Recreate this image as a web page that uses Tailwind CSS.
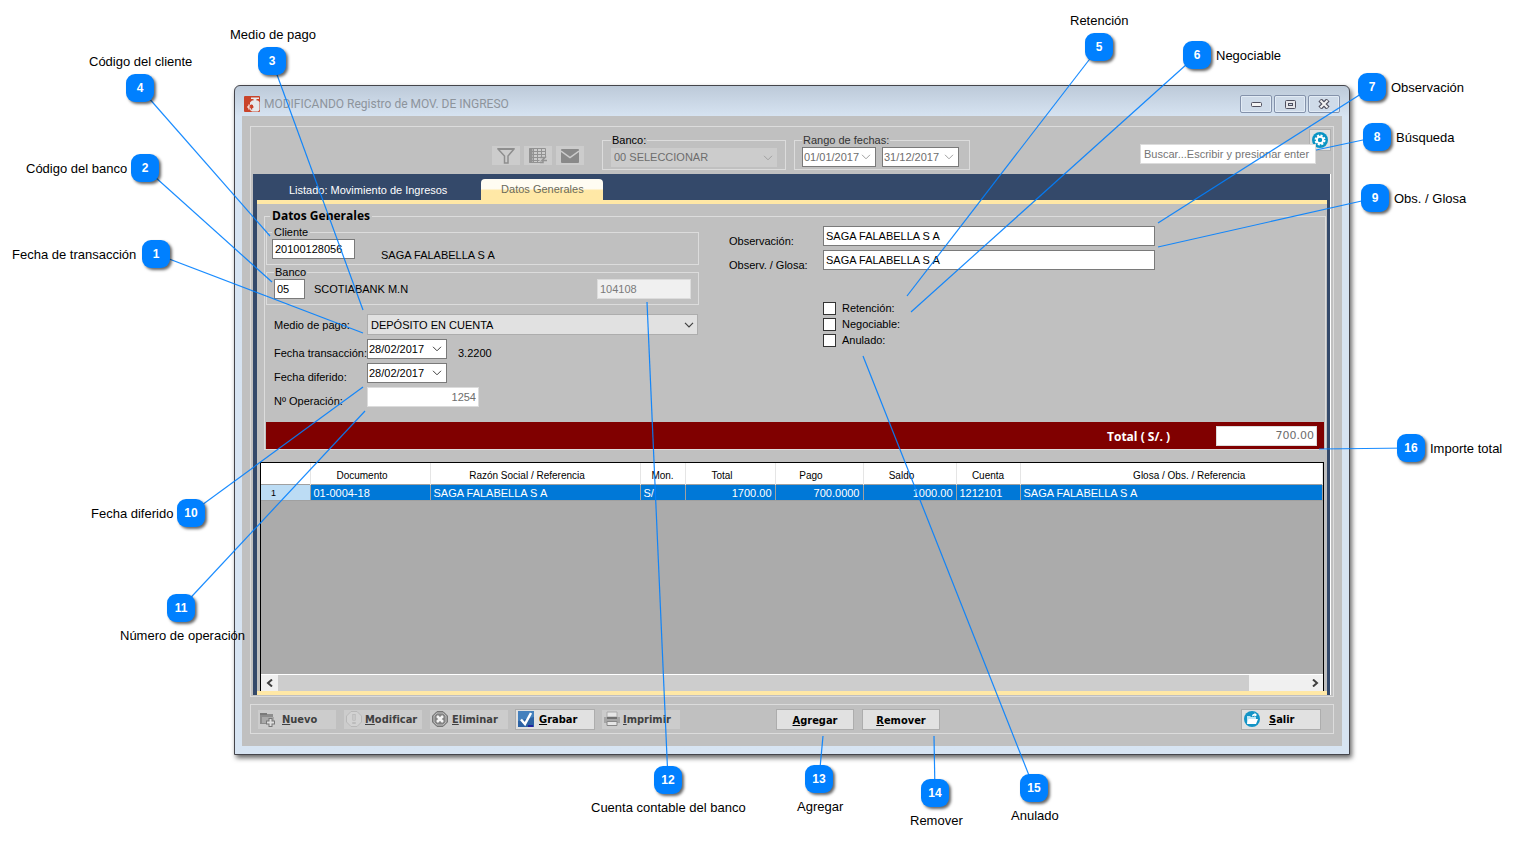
<!DOCTYPE html>
<html lang="es">
<head>
  <meta charset="UTF-8" />
  <meta name="viewport" content="width=device-width, initial-scale=1.0" />
  <title>Registro de MOV. DE INGRESO</title>
  <script src="https://cdn.jsdelivr.net/npm/@tailwindcss/browser@4"></script>
</head>
<body class="bg-white font-['Liberation_Sans',sans-serif] text-[11px] text-black">

  <div class="relative pt-[85px] pr-[168px] pb-[88px] pl-[234px]">

    <!-- Window -->
    <main class="rounded-t-md border border-[#45454b] bg-[#d7e4f2] px-[7px] pb-[8px] shadow-[2px_3px_5px_rgba(0,0,0,0.6)] bg-linear-to-b from-[#bdcad9] via-[#d7e4f2] via-[31px] to-[#d7e4f2]">

      <!-- Title bar -->
      <header class="flex h-[30px] items-center pt-[6px] pr-[2px] pl-[2px]">
        <svg class="size-4" viewBox="0 0 16 16">
          <rect width="16" height="16" rx="1" fill="#c9432a" />
          <path d="M8 4.500h1.500V3H7V1.500h8V3h-2.500v1.500H14l1.500 1.500v8L14 15.500H8L6 14v-2h3V9H6V6.500z" fill="#e6e9eb" />
          <path d="M5 8.500v5M3 11h4.500" stroke="#fff" stroke-width="1.200" />
          <path d="M7.500 8.500v5M5.500 11h4" stroke="#c9432a" stroke-width="1.500" />
        </svg>
        <h1 class="ml-1 font-[Roboto,sans-serif] text-[12px] text-[#8d949c]">MODIFICANDO Registro de MOV. DE INGRESO</h1>
        <div class="ml-auto flex gap-[2px]">
          <button aria-label="Minimizar" class="flex h-[18px] w-8 items-center justify-center rounded-xs border border-[#8492ab] bg-[#cfdbe9] shadow-[inset_0_0_0_1px_#e2ebf5]">
            <svg class="h-[5px] w-[11px]" viewBox="0 0 11 5"><rect x=".5" y=".5" width="10" height="4" rx="1" fill="#f4f4f4" stroke="#50505f" /></svg>
          </button>
          <button aria-label="Maximizar" class="flex h-[18px] w-8 items-center justify-center rounded-xs border border-[#8492ab] bg-[#cfdbe9] shadow-[inset_0_0_0_1px_#e2ebf5]">
            <svg class="h-[9px] w-[11px]" viewBox="0 0 11 9"><rect x=".5" y=".5" width="10" height="8" rx="1" fill="#e6e6ea" stroke="#50505f" /><rect x="3.500" y="3.500" width="4" height="2" fill="#cfdbe9" stroke="#50505f" /></svg>
          </button>
          <button aria-label="Cerrar" class="flex h-[18px] w-8 items-center justify-center rounded-xs border border-[#8492ab] bg-[#cfdbe9] shadow-[inset_0_0_0_1px_#e2ebf5]">
            <svg class="h-[10px] w-3" viewBox="0 0 12 10"><path d="M2 1l8 8M10 1L2 9" stroke="#50505f" stroke-width="4.500" /><path d="M2.500 1.500l7 7M9.500 1.500l-7 7" stroke="#f4f4f4" stroke-width="2" /></svg>
          </button>
        </div>
      </header>

      <div class="bg-[#c0c0c0] px-[8px] pt-[10px] pb-[12px]">

        <section class="border border-[#dcdcdc] px-[2px] pb-[1px]">

          <!-- Toolbar -->
          <div class="flex h-[47px] items-start pl-[239px]">
            <div class="mt-[19px] flex gap-1">
              <button disabled aria-label="Filtrar" class="flex h-[19px] w-7 items-center justify-center bg-[#cccccc]">
                <svg class="size-[18px]" viewBox="0 0 18 18" fill="none" stroke="#8e8e8e" stroke-width="1.500"><path d="M1 2h16l-6 7v7H7.500V9z" /><path d="M1 2h16" stroke-width="2" /></svg>
              </button>
              <button disabled aria-label="Exportar" class="flex h-[19px] w-7 items-center justify-center bg-[#cccccc]">
                <svg class="size-[18px]" viewBox="0 0 18 18" fill="none" stroke="#929292"><path d="M.5 1.500h16v9M.5 1.500v14h11M.5 4.500h16M.5 7.500h16M.5 10.500h12M.5 13.500h10M4.500 1.500v14M8.500 1.500v14M12.500 1.500v9" /><path d="M2 1v15" stroke-width="3" /><path d="M11 10.500h5l-3 3h5M14 12.500v3h-3" stroke-width="1.500" /></svg>
              </button>
              <button disabled aria-label="Enviar correo" class="flex h-[19px] w-7 items-center justify-center bg-[#cccccc]">
                <svg class="h-[14px] w-[18px]" viewBox="0 0 18 14"><rect width="18" height="14" rx="1" fill="#898989" /><path d="M0 2l9 6.500L18 2" fill="none" stroke="#cccccc" stroke-width="1.500" /></svg>
              </button>
            </div>

            <fieldset class="mt-[6px] ml-[18px] h-[37px] w-[184px] shrink-0 border border-[#dcdcdc] px-2">
              <legend class="px-[1px] leading-[14px]">Banco:</legend>
              <div class="relative mt-[1px]">
                <select disabled aria-label="Banco" class="h-[19px] w-full appearance-none bg-[#cccccc] px-[3px] text-[#6d6d6d] opacity-100">
                  <option>00 SELECCIONAR</option>
                </select>
                <svg class="pointer-events-none absolute top-[7px] right-1 h-[6px] w-[10px]" viewBox="0 0 10 6" fill="none" stroke="#a0a0a0"><path d="M1 .8l4 4 4-4" /></svg>
              </div>
            </fieldset>

            <fieldset class="mt-[6px] ml-2 h-[37px] w-[176px] shrink-0 border border-[#dcdcdc] px-[7px]">
              <legend class="px-[1px] leading-[14px] text-[#333]">Rango de fechas:</legend>
              <div class="flex gap-[6px]">
                <div class="flex h-5 w-[74px] items-center border border-[#7a7a7a] bg-white pr-1">
                  <input disabled aria-label="Fecha desde" value="01/01/2017" class="w-0 flex-1 pl-[1px] text-[#6d6d6d]" />
                  <svg class="h-[6px] w-[10px]" viewBox="0 0 10 6" fill="none" stroke="#a0a0a0"><path d="M1 .8l4 4 4-4" /></svg>
                </div>
                <div class="flex h-5 w-[77px] items-center border border-[#7a7a7a] bg-white pr-1">
                  <input disabled aria-label="Fecha hasta" value="31/12/2017" class="w-0 flex-1 pl-[1px] text-[#6d6d6d]" />
                  <svg class="h-[6px] w-[10px]" viewBox="0 0 10 6" fill="none" stroke="#a0a0a0"><path d="M1 .8l4 4 4-4" /></svg>
                </div>
              </div>
            </fieldset>

            <div class="relative ml-auto pt-[17px] pr-[15px]">
              <button aria-label="Configuración" class="absolute top-[2px] right-0 flex size-[22px] items-center justify-center border border-[#b0b0b0] bg-[#e1e1e1]">
                <svg class="size-4" viewBox="0 0 16 16"><circle cx="8" cy="8" r="8" fill="#0a94c4" /><circle cx="8" cy="8" r="4" fill="none" stroke="#fff" stroke-width="3" stroke-dasharray="1.800 1.340" /><circle cx="8" cy="8" r="3.200" fill="none" stroke="#fff" stroke-width="2" /></svg>
              </button>
              <input type="text" aria-label="Búsqueda" placeholder="Buscar...Escribir y presionar enter" class="relative h-5 w-[176px] border border-[#dcdcdc] bg-white pl-[3px] placeholder:text-[#757575]" />
            </div>
          </div>

          <!-- Tabs -->
          <div class="border-r border-white bg-[#34496a] pr-[3px] pl-1">
            <nav class="flex h-[26px] items-end">
              <a href="#listado" class="ml-8 leading-5 text-white">Listado: Movimiento de Ingresos</a>
              <button class="ml-[34px] h-[21px] w-[122px] rounded-t-sm bg-linear-to-b from-[#fffcf2] from-45% to-[#ffe8a6] to-55% text-[#6a6a5a]">Datos Generales</button>
            </nav>

            <div class="border-y-4 border-[#ffe8a6] bg-[#c0c0c0] pt-1">

              <!-- Form -->
              <fieldset class="mr-[1px] ml-[7px] border border-[#dcdcdc] px-[1px]">
                <legend class="ml-1 px-[2px] font-['Open_Sans',sans-serif] text-[12px] leading-4 font-bold">Datos Generales</legend>

                <div class="flex items-start">
                  <div class="w-[433px] shrink-0 pt-[1px]">
                    <fieldset class="flex h-10 border border-[#dcdcdc] px-[5px]">
                      <legend class="px-[2px] leading-[14px]">Cliente</legend>
                      <div class="flex items-end">
                        <input type="text" aria-label="Código del cliente" value="20100128056" class="h-5 w-[83px] self-start border border-[#7a7a7a] bg-white pl-[2px]" />
                        <span class="ml-[26px] leading-[18px]">SAGA FALABELLA S A</span>
                      </div>
                    </fieldset>
                    <fieldset class="h-10 border border-[#dcdcdc] px-[7px]">
                      <legend class="px-[1px] leading-[14px]">Banco</legend>
                      <div class="flex items-center">
                        <input type="text" aria-label="Código del banco" value="05" class="h-5 w-[31px] border border-[#7a7a7a] bg-white pl-[2px]" />
                        <span class="ml-[9px]">SCOTIABANK M.N</span>
                        <input type="text" readonly aria-label="Cuenta contable del banco" value="104108" class="ml-auto h-5 w-[94px] border border-[#dcdcdc] bg-[#f0f0f0] pl-[2px] text-[#7a7a7a]" />
                      </div>
                    </fieldset>

                    <div class="mt-[9px] grid grid-cols-[93px_331px] items-end gap-y-1 pl-2 leading-[12px]">
                      <label for="medio" class="self-center">Medio de pago:</label>
                      <div class="relative">
                        <select id="medio" class="block h-[21px] w-full appearance-none border border-[#adadad] bg-[#e1e1e1] px-[3px]">
                          <option>DEPÓSITO EN CUENTA</option>
                        </select>
                        <svg class="pointer-events-none absolute top-2 right-1 h-[6px] w-[10px]" viewBox="0 0 10 6" fill="none" stroke="#404040" stroke-width="1.200"><path d="M1 .8l4 4 4-4" /></svg>
                      </div>
                      <label for="ftrans" class="whitespace-nowrap">Fecha transacción:</label>
                      <div class="flex items-end">
                        <div class="flex h-5 w-20 items-center border border-[#7a7a7a] bg-white pr-1">
                          <input id="ftrans" type="text" value="28/02/2017" class="w-0 flex-1 pl-[1px]" />
                          <svg class="h-[6px] w-[10px]" viewBox="0 0 10 6" fill="none" stroke="#404040"><path d="M1 .8l4 4 4-4" /></svg>
                        </div>
                        <span class="ml-[11px]">3.2200</span>
                      </div>
                      <label for="fdif">Fecha diferido:</label>
                      <div class="flex h-5 w-20 items-center border border-[#7a7a7a] bg-white pr-1">
                        <input id="fdif" type="text" value="28/02/2017" class="w-0 flex-1 pl-[1px]" />
                        <svg class="h-[6px] w-[10px]" viewBox="0 0 10 6" fill="none" stroke="#404040"><path d="M1 .8l4 4 4-4" /></svg>
                      </div>
                      <label for="nop">Nº Operación:</label>
                      <input id="nop" type="text" readonly value="1254" class="h-5 w-28 border border-[#dcdcdc] bg-white pr-[2px] text-right text-[#6d6d6d]" />
                    </div>
                  </div>

                  <div class="ml-[30px] pt-[2px]">
                    <div class="grid grid-cols-[94px_332px] items-end gap-y-1 leading-[10px]">
                      <label for="obs">Observación:</label>
                      <input id="obs" type="text" value="SAGA FALABELLA S A" class="h-5 border border-[#7a7a7a] bg-white pl-[2px]" />
                      <label for="glosa">Observ. / Glosa:</label>
                      <input id="glosa" type="text" value="SAGA FALABELLA S A" class="h-5 border border-[#7a7a7a] bg-white pl-[2px]" />
                    </div>
                    <div class="mt-[30px] ml-[94px] flex flex-col leading-4">
                      <label class="flex items-center gap-[6px]"><input type="checkbox" class="size-[13px] appearance-none border border-[#333] bg-white" />Retención:</label>
                      <label class="flex items-center gap-[6px]"><input type="checkbox" class="size-[13px] appearance-none border border-[#333] bg-white" />Negociable:</label>
                      <label class="flex items-center gap-[6px]"><input type="checkbox" class="size-[13px] appearance-none border border-[#333] bg-white" />Anulado:</label>
                    </div>
                  </div>
                </div>

                <div class="mt-[15px] flex h-[27px] items-center justify-end bg-[#800000] pr-[7px]">
                  <label for="total" class="mr-[46px] pt-[2px] font-['Open_Sans',sans-serif] text-[12px] font-bold text-white">Total ( S/. )</label>
                  <input id="total" type="text" readonly value="700.00" class="h-5 w-[101px] border border-[#dcdcdc] bg-white pr-[2px] text-right font-['DejaVu_Sans',sans-serif] text-[#6d6d6d]" />
                </div>
              </fieldset>

              <!-- Grid -->
              <div class="mt-[12px] mr-[3px] ml-[3px] flex h-[229px] flex-col border-x border-t border-black bg-[#ababab]">
                <table class="w-full table-fixed border-collapse whitespace-nowrap">
                  <colgroup>
                    <col class="w-[49px]" /><col class="w-[120px]" /><col class="w-[210px]" /><col class="w-[45px]" /><col class="w-[90px]" />
                    <col class="w-[88px]" /><col class="w-[93px]" /><col class="w-[64px]" /><col />
                  </colgroup>
                  <thead>
                    <tr class="h-[21px] border-b border-[#a0a0a0] bg-white text-[10px] *:border-r *:border-[#e5e5e5] *:p-0 *:pt-[4px] *:font-normal">
                      <th></th>
                      <th><span class="mr-4">Documento</span></th>
                      <th><span class="mr-4">Razón Social / Referencia</span></th>
                      <th>Mon.</th>
                      <th><span class="mr-4">Total</span></th>
                      <th><span class="mr-4">Pago</span></th>
                      <th><span class="mr-4">Saldo</span></th>
                      <th>Cuenta</th>
                      <th><span class="ml-9">Glosa / Obs. / Referencia</span></th>
                    </tr>
                  </thead>
                  <tbody>
                    <tr class="h-4 border-b border-[#a0a0a0] bg-[#0078d7] leading-[14px] text-white *:border-r *:border-[#a0a0a0] *:px-[3px] *:pt-[1px] *:pb-0">
                      <td class="bg-[#bcdcf4] text-[9px] text-black"><span class="ml-[7px]">1</span></td>
                      <td>01-0004-18</td>
                      <td>SAGA FALABELLA S A</td>
                      <td>S/</td>
                      <td class="text-right">1700.00</td>
                      <td class="text-right">700.0000</td>
                      <td class="text-right">1000.00</td>
                      <td>1212101</td>
                      <td>SAGA FALABELLA S A</td>
                    </tr>
                  </tbody>
                </table>
                <div class="mt-auto flex h-[17px] items-center justify-between border-t border-white bg-[#f0f0f0]">
                  <button aria-label="Desplazar a la izquierda" class="flex w-[17px] justify-center"><svg class="size-2" viewBox="0 0 8 8" fill="none" stroke="#404040" stroke-width="2"><path d="M6 .5L2 4l4 3.500" /></svg></button>
                  <div class="mr-[57px] h-full flex-1 bg-[#cdcdcd]"></div>
                  <button aria-label="Desplazar a la derecha" class="flex w-[17px] justify-center"><svg class="size-2" viewBox="0 0 8 8" fill="none" stroke="#404040" stroke-width="2"><path d="M2 .5L6 4 2 7.500" /></svg></button>
                </div>
              </div>
            </div>
          </div>
        </section>

        <!-- Actions -->
        <footer class="mt-[7px] flex h-[30px] items-center border border-[#dcdcdc] pr-[12px] pl-[7px] font-['DejaVu_Sans_Condensed','DejaVu_Sans',sans-serif] text-[11px] font-bold">
          <button disabled class="flex h-[19px] w-[78px] items-center gap-[6px] bg-[#cccccc] pl-[2px] text-[#404040]">
            <svg class="size-4" viewBox="0 0 16 16"><path d="M0 3h13v10H0z" fill="#8d8d8d" /><path d="M2 6h12v6H2z" fill="#aaa" /><path d="M0 2h7v2H0z" fill="#7a7a7a" /><path d="M10.500 7v9M6 11.500h9" stroke="#777" stroke-width="4" /><path d="M10.500 8v7M7 11.500h7" stroke="#ddd" stroke-width="2" /></svg>
            <span class="pt-[2px]"><u>N</u>uevo</span>
          </button>
          <button disabled class="ml-2 flex h-[19px] w-[78px] items-center gap-[3px] bg-[#cccccc] pl-[2px] text-[#404040]">
            <svg class="size-4 shrink-0" viewBox="0 0 16 16"><path d="M5 .5h6L15.500 5v6L11 15.500H5L.5 11V5z" fill="#d2d2d2" stroke="#b8b8b8" /><path d="M8 3v6.500M8 11v2" stroke="#b0b0b0" stroke-width="3" /><path d="M8 3.500v5.500M8 11.500v1" stroke="#e0e0e0" /></svg>
            <span class="pt-[2px]"><u>M</u>odificar</span>
          </button>
          <button disabled class="ml-2 flex h-[19px] w-[78px] items-center gap-[4px] bg-[#cccccc] pl-[2px] text-[#404040]">
            <svg class="size-4 shrink-0" viewBox="0 0 16 16"><path d="M5 .5h6L15.500 5v6L11 15.500H5L.5 11V5z" fill="#858585" stroke="#777" /><path d="M5 2h6l3 3v6l-3 3H5l-3-3V5z" fill="none" stroke="#bbb" /><path d="M5 5l6 6M11 5l-6 6" stroke="#f4f4f4" stroke-width="2.500" /></svg>
            <span class="pt-[2px]"><u>E</u>liminar</span>
          </button>
          <button class="ml-[7px] flex h-[21px] w-20 items-center gap-[5px] border border-[#adadad] bg-[#e1e1e1] pl-[2px]">
            <svg class="size-4 shrink-0" viewBox="0 0 16 16"><rect width="16" height="16" fill="#2c62a4" /><path d="M0 0h16v6L0 10z" fill="#4480bd" /><path d="M10 14h5v2h-5z" fill="#2222a0" /><path d="M3 8.500l4 4.500 6-11" fill="none" stroke="#fff" stroke-width="2.500" /></svg>
            <span class="pt-[2px]"><u>G</u>rabar</span>
          </button>
          <button disabled class="ml-[7px] flex h-[19px] w-[78px] items-center gap-[3px] bg-[#cccccc] pl-[2px] text-[#404040]">
            <svg class="size-4 shrink-0" viewBox="0 0 16 16"><path d="M3 1h10v5H3z" fill="#e6e6e6" stroke="#aaa" /><path d="M0 6h16v6H0z" fill="#a6a6a6" /><path d="M3 6h10v2H3z" fill="#707070" /><path d="M3 10.500h10v4H3z" fill="#e6e6e6" stroke="#888" /></svg>
            <span class="pt-[2px]"><u>I</u>mprimir</span>
          </button>
          <button class="ml-24 h-[21px] w-[78px] border border-[#adadad] bg-[#e1e1e1] pt-[3px]"><u>A</u>gregar</button>
          <button class="ml-2 h-[21px] w-[78px] border border-[#adadad] bg-[#e1e1e1] pt-[3px]"><u>R</u>emover</button>
          <button class="ml-auto flex h-[21px] w-20 items-center gap-[9px] border border-[#adadad] bg-[#e1e1e1] pl-[2px]">
            <svg class="size-4 shrink-0" viewBox="0 0 16 16"><circle cx="8" cy="8" r="8" fill="#1494c6" /><path d="M3 5h3l1 1h5v7H3z" fill="#bfe6f5" /><path d="M4.500 8H14l-2 5H3z" fill="#fff" /><path d="M8 5.500c0-2 1-2.500 2.500-2.500V1.500L13 4l-2.500 2V4.500" fill="#fff" /></svg>
            <span class="pt-[2px]"><u>S</u>alir</span>
          </button>
        </footer>
      </div>
    </main>

    <!-- Callouts -->
    <svg id="lines" class="pointer-events-none absolute inset-0 h-full w-full" fill="none" stroke="#0080ff" stroke-width="1.200" stroke-opacity=".9"></svg>
    <div id="callouts"></div>
  </div>

  <script>
    // x, y: badge centre; tx, ty: line end; lx, ly: label left edge and middle
    const callouts = [
      { n: 1, x: 156, y: 254, tx: 363, ty: 333, lx: 12, ly: 254, text: "Fecha de transacción" },
      { n: 2, x: 145, y: 168, tx: 272, ty: 282, lx: 26, ly: 168, text: "Código del banco" },
      { n: 3, x: 272, y: 61, tx: 363, ty: 310, lx: 230, ly: 34, text: "Medio de pago" },
      { n: 4, x: 140, y: 88, tx: 270, ty: 236, lx: 89, ly: 61, text: "Código del cliente" },
      { n: 5, x: 1099, y: 47, tx: 907, ty: 296, lx: 1070, ly: 20, text: "Retención" },
      { n: 6, x: 1197, y: 55, tx: 911, ty: 312, lx: 1216, ly: 55, text: "Negociable" },
      { n: 7, x: 1372, y: 87, tx: 1158, ty: 223, lx: 1391, ly: 87, text: "Observación" },
      { n: 8, x: 1377, y: 137, tx: 1316, ty: 150, lx: 1396, ly: 137, text: "Búsqueda" },
      { n: 9, x: 1375, y: 198, tx: 1158, ty: 247, lx: 1394, ly: 198, text: "Obs. / Glosa" },
      { n: 10, x: 191, y: 513, tx: 363, ty: 387, lx: 91, ly: 513, text: "Fecha diferido" },
      { n: 11, x: 181, y: 608, tx: 365, ty: 411, lx: 120, ly: 635, text: "Número de operación" },
      { n: 12, x: 668, y: 780, tx: 647, ty: 302, lx: 591, ly: 807, text: "Cuenta contable del banco" },
      { n: 13, x: 819, y: 779, tx: 823, ty: 736, lx: 797, ly: 806, text: "Agregar" },
      { n: 14, x: 935, y: 793, tx: 934, ty: 736, lx: 910, ly: 820, text: "Remover" },
      { n: 15, x: 1034, y: 788, tx: 863, ty: 356, lx: 1011, ly: 815, text: "Anulado" },
      { n: 16, x: 1411, y: 448, tx: 1319, ty: 449, lx: 1430, ly: 448, text: "Importe total" },
    ];

    const lines = document.getElementById("lines");
    const layer = document.getElementById("callouts");

    callouts.forEach((c) => {
      const line = document.createElementNS("http://www.w3.org/2000/svg", "line");
      line.setAttribute("x1", c.x);
      line.setAttribute("y1", c.y);
      line.setAttribute("x2", c.tx);
      line.setAttribute("y2", c.ty);
      lines.appendChild(line);

      const badge = document.createElement("span");
      badge.className = "absolute flex size-7 items-center justify-center rounded-[9px] bg-[#0080ff] text-[12px] font-bold text-white shadow-[2px_2px_3px_rgba(0,0,0,0.6)]";
      badge.style.left = c.x - 14 + "px";
      badge.style.top = c.y - 14 + "px";
      badge.textContent = c.n;
      layer.appendChild(badge);

      const label = document.createElement("span");
      label.className = "absolute text-[13px] leading-4 whitespace-nowrap";
      label.style.left = c.lx + "px";
      label.style.top = c.ly - 7 + "px";
      label.textContent = c.text;
      layer.appendChild(label);
    });
  </script>

</body>
</html>
